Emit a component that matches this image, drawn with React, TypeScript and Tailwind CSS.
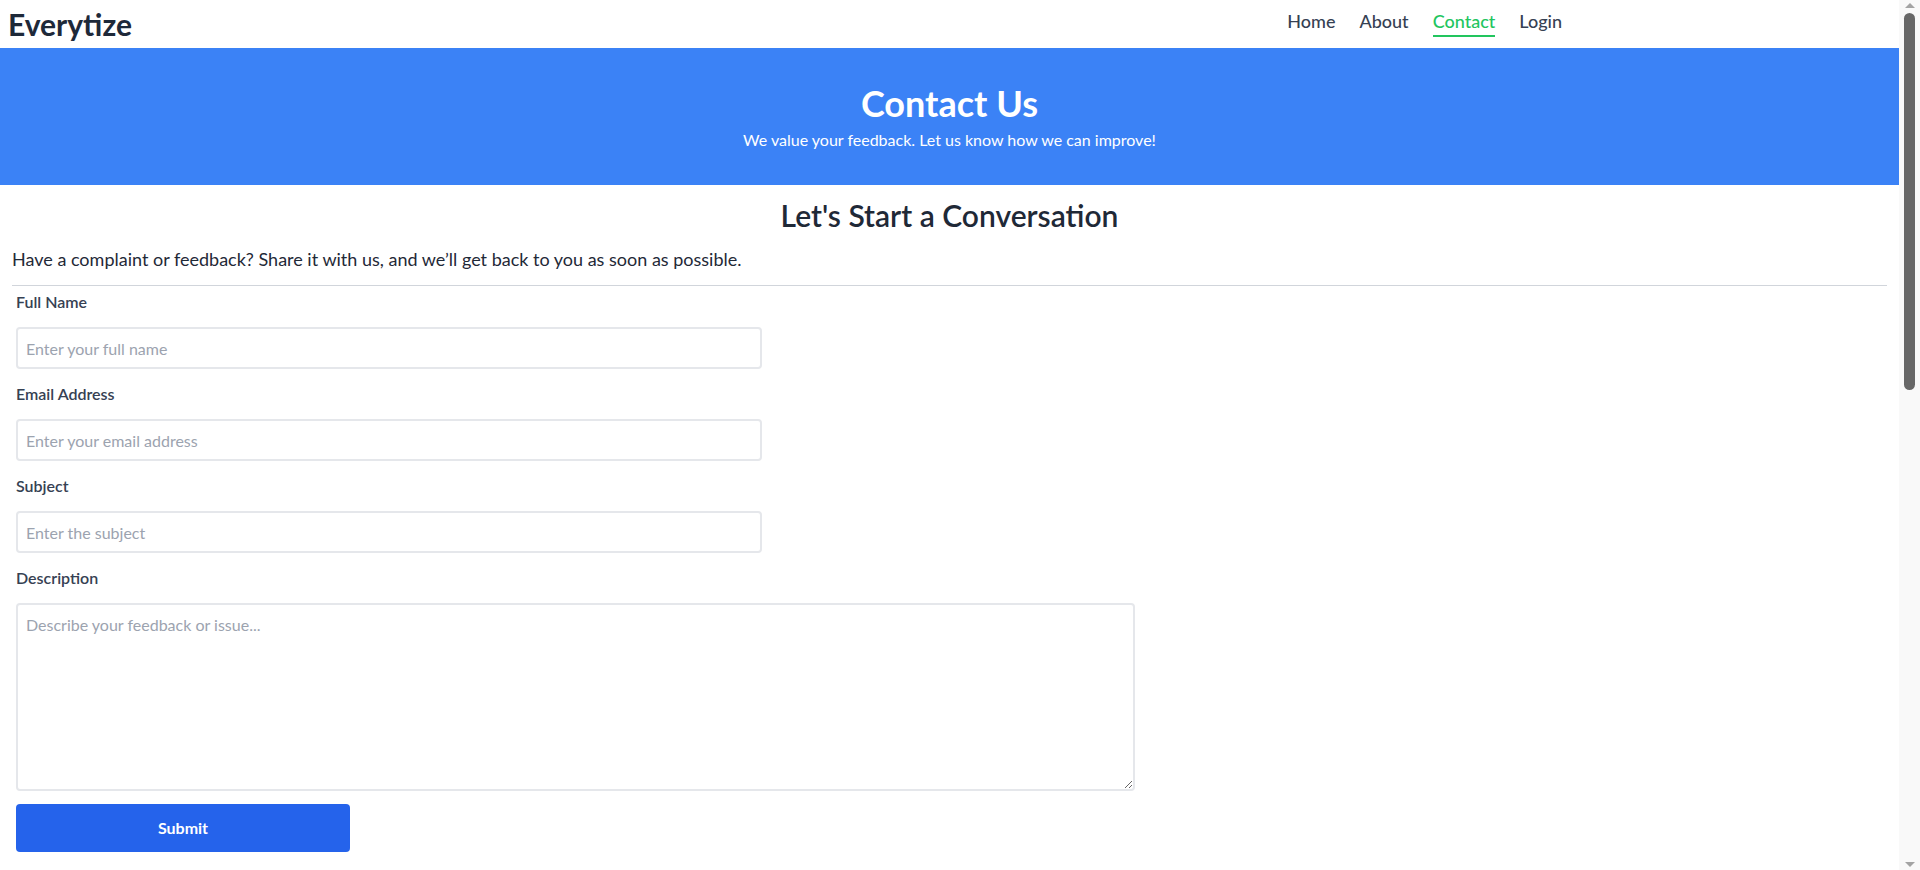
import React, { useState } from 'react';

const NavBar: React.FC = () => {
  const links = ['Home', 'About', 'Contact', 'Login'];
  return (
    <header className="h-12 flex items-center justify-between bg-white">
      <div className="pl-2 text-3xl font-bold text-gray-800">Everytize</div>
      <ul className="flex items-center gap-6 mr-[337px]">
        {links.map((l) => (
          <li key={l}>
            <a
              href="#"
              className={
                l === 'Contact'
                  ? 'block text-lg font-medium leading-5 pb-1 border-b-2 border-[#22c55e] text-[#22c55e]'
                  : 'block text-lg font-medium leading-5 pb-1 border-b-2 border-transparent text-gray-700'
              }
            >
              {l}
            </a>
          </li>
        ))}
      </ul>
    </header>
  );
};

const Field: React.FC<{ label: string; placeholder: string; type?: string }> = ({ label, placeholder, type = 'text' }) => (
  <>
    <label className="block text-base leading-6 font-semibold text-gray-700">{label}</label>
    <input
      type={type}
      placeholder={placeholder}
      className="w-[746px] h-[42px] p-2 text-base border-2 border-[#e5e7eb] rounded placeholder:text-[#9ca3af] focus:outline-none focus:border-[#60a5fa]"
    />
  </>
);

// window scrollbar as seen in the screenshot
const ScrollTrack: React.FC = () => (
  <aside className="w-[21px] shrink-0 h-[870px] bg-[#f9f9f9] flex flex-col items-center justify-between py-[3px]">
    <div className="w-0 h-0 border-x-[5px] border-x-transparent border-b-[5px] border-b-[#a3a3a3]" />
    <div className="flex-1 w-full flex justify-center pt-[5px]">
      <div className="w-[11px] h-[377px] rounded-full bg-[#676767]" />
    </div>
    <div className="w-0 h-0 border-x-[5px] border-x-transparent border-t-[5px] border-t-[#a3a3a3]" />
  </aside>
);

export default function App() {
  const [sent, setSent] = useState(false);

  return (
    <div className="flex bg-white text-[#1f2937]" style={{ fontFamily: 'Lato, "Open Sans", sans-serif' }}>
      <div className="w-[1899px] shrink-0 min-h-[1930px]">
        <NavBar />

        <section className="bg-[#3b82f6] pt-[35px] pb-[33px] text-center text-white">
          <h1 className="text-4xl font-bold mb-[5px]">Contact Us</h1>
          <p className="text-base leading-6">We value your feedback. Let us know how we can improve!</p>
        </section>

        <main className="p-3">
          <h2 className="text-3xl font-semibold text-center text-[#1f2937]">Let's Start a Conversation</h2>
          <p className="mt-3 text-lg text-[#1f2937]">
            Have a complaint or feedback? Share it with us, and we’ll get back to you as soon as possible.
          </p>
          <hr className="mt-3 mb-1 border-[#d1d5db]" />

          <form
            className="flex flex-col gap-[13px] px-1"
            onSubmit={(e) => {
              e.preventDefault();
              setSent(true);
            }}
          >
            <Field label="Full Name" placeholder="Enter your full name" />
            <Field label="Email Address" placeholder="Enter your email address" type="email" />
            <Field label="Subject" placeholder="Enter the subject" />
            <label className="block text-base leading-6 font-semibold text-gray-700">Description</label>
            <textarea
              placeholder="Describe your feedback or issue..."
              className="w-[1119px] h-[188px] p-2 text-base leading-6 border-2 border-[#e5e7eb] rounded placeholder:text-[#9ca3af] focus:outline-none focus:border-[#60a5fa]"
            />
            <button
              type="submit"
              className="w-[334px] h-12 bg-[#2563eb] hover:bg-[#1d4ed8] text-white text-base font-bold rounded"
            >
              {sent ? 'Sent!' : 'Submit'}
            </button>
          </form>
        </main>
      </div>
      <ScrollTrack />
    </div>
  );
}
